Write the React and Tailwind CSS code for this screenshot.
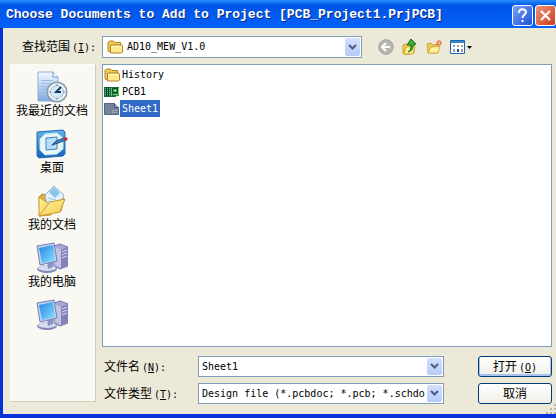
import React, { useState } from "react";

const files = [
  { name: "History", icon: FolderIcon },
  { name: "PCB1", icon: PcbIcon },
  { name: "Sheet1", icon: SheetIcon },
];

const places = [
  { label: "我最近的文档", icon: RecentIcon },
  { label: "桌面", icon: DesktopIcon },
  { label: "我的文档", icon: DocumentsIcon },
  { label: "我的电脑", icon: ComputerIcon },
  { label: "", icon: ComputerIcon },
];

function FolderIcon() {
  return (
    <svg width="16" height="16" viewBox="0 0 16 16" className="shrink-0" aria-hidden="true">
      <path d="M1 12V3.500L2.500 2h4L8 3.500h5.500L14 6v7H3Z" fill="#f0c94f" stroke="#b0842a" />
      <path d="M4 6h10.500l1 1v6l-1 1H3.500V7Z" fill="#ffe98c" stroke="#b0842a" />
      <path d="M4.500 7.500h10" stroke="#fffbd8" />
    </svg>
  );
}

function PcbIcon() {
  return (
    <svg width="16" height="16" viewBox="0 0 16 16" className="shrink-0" aria-hidden="true">
      <path d="M0 3h15v9h-3v1H0Z" fill="#1b6e42" />
      <path d="M1 4.500h5M1 6.500h5M1 8.500h5M1 10.500h5M7.500 4v8" stroke="#58c388" />
      <path d="M2.500 3v9M4.500 3v9" stroke="#0a3822" />
      <path d="M8.500 4.500h5v4h-5Z" fill="#3bb25a" stroke="#0b4522" />
      <path d="M9 10.500h4v2M14.500 4v7" stroke="#74d64c" fill="none" />
      <path d="M10 6h2v1h-2Z" fill="#b8f09b" />
    </svg>
  );
}

function SheetIcon() {
  return (
    <svg width="16" height="16" viewBox="0 0 16 16" className="shrink-0" aria-hidden="true">
      <path d="M.5 2.500h10l4 4v7H.5Z" fill="#74839a" stroke="#56657c" />
      <path d="M10.500 2.500v4h4" fill="#a5b4ca" stroke="#44546d" />
      <path d="M8 9.500h6M8 11.500h6M8.500 9v4" stroke="#94a2b8" />
    </svg>
  );
}

function RecentIcon() {
  return (
    <svg width="32" height="32" viewBox="0 0 32 32" aria-hidden="true">
      <defs>
        <linearGradient id="page" x1="0" y1="0" x2="0" y2="1">
          <stop offset="0" stopColor="#f2f8ff" />
          <stop offset="1" stopColor="#7fa9e0" />
        </linearGradient>
      </defs>
      <path d="M2 1h15l5 5v24H2Z" fill="url(#page)" stroke="#8daed6" />
      <path d="M17 1v5h5" fill="#fff" stroke="#6d93c8" />
      <path d="M5 9.500h12M5 12.500h9M5 15.500h7M5 18.500h6M5 21.500h6" stroke="#9cbce4" />
      <circle cx="21" cy="21" r="10.500" fill="#7f8ea4" />
      <circle cx="21" cy="21" r="9" fill="#f2f6f9" stroke="#c5d1de" />
      <circle cx="21" cy="21" r="6.500" fill="#d0e8f6" stroke="#a6c0d6" />
      <path d="M21 13v2M21 27v2M13 21h2M27 21h2" stroke="#6f91ae" />
      <path d="m25 16-5 5h5" fill="none" stroke="#173959" strokeWidth="1.800" />
    </svg>
  );
}

function DesktopIcon() {
  return (
    <svg width="32" height="32" viewBox="0 0 32 32" aria-hidden="true">
      <defs>
        <linearGradient id="desk" x1="0" y1="0" x2="0" y2="1">
          <stop offset="0" stopColor="#5fb4ea" />
          <stop offset="1" stopColor="#1a62ba" />
        </linearGradient>
      </defs>
      <path d="M1 4 27 2l2 2v22l-2 2L3 30l-2-2Z" fill="url(#desk)" stroke="#2a6db4" />
      <path d="m9 6 12-1 6 5v11l-6 5-12 1-5-5V11Z" fill="#eaf6f3" stroke="#b9e3f6" />
      <path d="m10 10 11-1v12l-11 1Z" fill="#b4defa" stroke="#3d83c0" />
      <path d="m16 17 4-4 8-3 2 2-8 3Z" fill="#4287c2" stroke="#235080" />
      <path d="m27 10 3-1 2 2-2 2-2-1Z" fill="#b83543" />
      <path d="m15 18 3-3 1 1Z" fill="#33506e" />
    </svg>
  );
}

function DocumentsIcon() {
  return (
    <svg width="32" height="32" viewBox="0 0 32 32" aria-hidden="true">
      <defs>
        <linearGradient id="envelope" x1="0" y1="0" x2="1" y2="1">
          <stop offset="0" stopColor="#fff3a0" />
          <stop offset="1" stopColor="#f3c94a" />
        </linearGradient>
      </defs>
      <path d="M3 12 6 9l5 1 12 2 5 2-3 12-21 5Z" fill="#e0b03a" stroke="#b98b25" />
      <path d="m9 10 9-9 10 9-5 12-12-2Z" fill="#e4f3fb" stroke="#8fb4cf" />
      <path d="m13 7 5-5 6 6-5 5Z" fill="#8cc3e8" />
      <path d="m12 13 8 2M12 16l7 2" stroke="#9cc0d6" />
      <path d="m3 12 10 7 2 11L3 31Z" fill="url(#envelope)" stroke="#c99b2c" />
      <path d="M3 31 14 17l15-3-5 13Z" fill="url(#envelope)" stroke="#c99b2c" />
    </svg>
  );
}

function ComputerIcon() {
  return (
    <svg width="32" height="32" viewBox="0 0 32 32" aria-hidden="true">
      <defs>
        <linearGradient id="screen" x1="0" y1="0" x2="1" y2="1">
          <stop offset="0" stopColor="#2386e4" />
          <stop offset="1" stopColor="#86e2ff" />
        </linearGradient>
      </defs>
      <path d="m18 4 6-2 8 3v19l-8 3-6-3Z" fill="#a9a8d4" stroke="#7675ad" />
      <path d="m25 8 7-3v18l-7 3Z" fill="#8281bc" />
      <path d="m19 5 6 3v18l-6-3Z" fill="#c5c4e4" />
      <path d="m26 10 5-2M26 13l5-2M26 16l5-2" stroke="#dcdcf2" />
      <ellipse cx="11" cy="27" rx="10" ry="4" fill="#7f86b4" />
      <ellipse cx="11" cy="26" rx="9" ry="3" fill="#d5daee" />
      <path d="m11 20 6-1v6l-5 2Z" fill="#8b93c6" />
      <path d="m1 4 17-3 3 18L4 23Z" fill="#c3cfec" stroke="#7283ba" />
      <path d="m3 6 14-3 2 15-13 3Z" fill="url(#screen)" />
    </svg>
  );
}

function BackIcon() {
  return (
    <svg width="16" height="16" viewBox="0 0 16 16" aria-hidden="true">
      <circle cx="8" cy="8" r="7.300" fill="#b6b6b1" stroke="#a3a39e" />
      <path d="M12 8H4M8 4 4 8l4 4" fill="none" stroke="#fff" strokeWidth="2" />
    </svg>
  );
}

function UpIcon() {
  return (
    <svg width="16" height="16" viewBox="0 0 16 16" aria-hidden="true">
      <path d="m1 6 3-1 2 1 6-1v9l-9 2-2-2Z" fill="#efcf51" stroke="#c9a436" />
      <path d="m2 15 2-7 9-1-2 8Z" fill="#fff092" stroke="#cfaa32" />
      <path d="M6 13c3-2 3-4 3-7H5l4-6 5 5-3 1c0 4-1 6-5 7Z" fill="#35ac32" stroke="#167322" />
    </svg>
  );
}

function NewFolderIcon() {
  return (
    <svg width="16" height="16" viewBox="0 0 16 16" aria-hidden="true">
      <path d="m1 5 4-1 2 2 5-1v9H2Z" fill="#efc958" stroke="#cfa643" />
      <path d="m2 14 3-6 9-1-2 7Z" fill="#fff09b" stroke="#d2ac43" />
      <path d="M13 1v6M10 4h6M11 2l4 4M15 2l-4 4" stroke="#e0562a" />
      <circle cx="13" cy="4" r="1" fill="#ffd56b" />
    </svg>
  );
}

function ViewIcon() {
  return (
    <svg width="23" height="16" viewBox="0 0 23 16" aria-hidden="true">
      <path d="M.5 1.500h14v13H.5Z" fill="#fff" stroke="#1b68ad" />
      <path d="M1 2h13v2H1Z" fill="#3687ce" />
      <path d="M3 6h2v2H3ZM7 6h2v2H7ZM11 6h2v2h-2ZM3 10h2v3H3ZM11 10h2v3h-2Z" fill="#8ba1ae" />
      <path d="M7 10h2v3H7Z" fill="#164f98" />
      <path d="M17 7h5l-2.500 3Z" fill="#000" />
    </svg>
  );
}

function Chevron() {
  return (
    <span className="flex h-full w-[15px] items-center justify-center rounded-xs bg-linear-to-b from-[#d3e0fd] to-[#b5cbf8]">
      <svg width="9" height="7" viewBox="0 0 9 7" aria-hidden="true">
        <path d="m1 1 3.500 3.500L8 1" fill="none" stroke="#4a618c" strokeWidth="2.200" />
      </svg>
    </span>
  );
}

function ResizeGrip() {
  return (
    <svg width="10" height="10" viewBox="0 0 10 10" className="absolute right-0 bottom-0" aria-hidden="true">
      <path d="M8 0h2v2H8ZM4 4h2v2H4ZM8 4h2v2H8ZM0 8h2v2H0ZM4 8h2v2H4ZM8 8h2v2H8Z" fill="#b8b4a3" />
    </svg>
  );
}

// Caption with its access key, e.g. 打开(O)
function Caption({ text, hotkey, colon }) {
  return (
    <>
      {text}
      <span className="ml-0.5 text-[10px]">
        (<u>{hotkey}</u>){colon && ":"}
      </span>
    </>
  );
}

export default function App() {
  const [selected, setSelected] = useState("Sheet1");
  const [fileName, setFileName] = useState("Sheet1");

  const handleSelect = (name) => {
    setSelected(name);
    setFileName(name);
  };

  return (
    <main className="flex min-h-screen flex-col bg-[#0831d9] font-['DejaVu_Sans_Mono','Noto_Sans_CJK_SC',monospace] text-xs text-black">
      <header className="flex h-7 items-center justify-between bg-linear-to-b from-[#2a8cf8] via-[#0055e8] via-20% to-[#0561fa] pt-0.5 pl-1.5">
        <h1 className="truncate font-['Liberation_Mono',monospace] text-[13px] font-bold text-white [text-shadow:1px_1px_#0a2a80]">
          Choose Documents to Add to Project [PCB_Project1.PrjPCB]
        </h1>
        <div className="flex shrink-0 gap-0.5">
          <button aria-label="Help" className="flex size-[21px] items-center justify-center rounded-[3px] border border-white bg-linear-to-br from-[#7ba0f5] to-[#1c4fd8]">
            <svg width="13" height="15" viewBox="0 0 13 15" aria-hidden="true">
              <path d="M3 5c0-5 7-4.500 7-1 0 2.500-3.500 3-3.500 6" fill="none" stroke="#fff" strokeWidth="2" />
              <path d="M5.500 12h2v2h-2Z" fill="#fff" />
            </svg>
          </button>
          <button aria-label="Close" className="flex size-[21px] items-center justify-center rounded-[3px] border border-white bg-linear-to-br from-[#ef9377] to-[#cc3912]">
            <svg width="13" height="13" viewBox="0 0 13 13" aria-hidden="true">
              <path d="m2 2 9 9m0-9-9 9" stroke="#fff" strokeWidth="2.200" />
            </svg>
          </button>
        </div>
      </header>

      <div className="relative mb-1 ml-[3px] flex flex-1 flex-col gap-1.5 bg-[#ece9d8] pt-2 pr-1 pl-[7px]">
        <div className="flex items-center">
          <label htmlFor="look-in" className="w-[92px] shrink-0 pl-3 whitespace-nowrap">
            <Caption text="查找范围" hotkey="I" colon />
          </label>
          <div className="relative flex h-[22px] w-[48%] items-center border border-[#7f9db9] bg-white">
            <span className="pointer-events-none absolute left-1">
              <FolderIcon />
            </span>
            <select id="look-in" className="h-full w-full appearance-none pl-6 text-[10px] outline-none">
              <option>AD10_MEW_V1.0</option>
            </select>
            <span className="pointer-events-none absolute inset-y-px right-px">
              <Chevron />
            </span>
          </div>
          <div className="ml-4 flex gap-2">
            <button aria-label="Back" disabled><BackIcon /></button>
            <button aria-label="Up one level"><UpIcon /></button>
            <button aria-label="New folder"><NewFolderIcon /></button>
            <button aria-label="View menu"><ViewIcon /></button>
          </div>
        </div>

        <div className="flex flex-1 gap-1.5">
          <nav className="mb-3 flex w-[86px] shrink-0 flex-col gap-[9px] border border-[#fdfcf8] border-r-[#d0cdbc] border-b-[#d0cdbc] bg-[#f9f8f2] pt-1.5 pr-0.5">
            {places.map((place, index) => (
              <button key={index} aria-label={place.label || "Network"} className="flex flex-col items-center">
                <place.icon />
                <span className="h-4 leading-4 whitespace-nowrap">{place.label}</span>
              </button>
            ))}
          </nav>

          <div className="flex min-w-0 flex-1 flex-col gap-[9px] pb-2.5">
            <ul className="flex-1 border border-[#7f9db9] bg-white pt-px pl-px">
              {files.map((file) => (
                <li key={file.name}>
                  <button onClick={() => handleSelect(file.name)} className="flex h-[17px] items-center text-[10px]">
                    <file.icon />
                    <span className={selected === file.name ? "bg-[#316ac5] px-0.5 leading-[17px] text-white" : "px-0.5 leading-[17px]"}>
                      {file.name}
                    </span>
                  </button>
                </li>
              ))}
            </ul>

            <div className="grid grid-cols-[96px_1fr_74px] items-center gap-y-1.5">
              <label htmlFor="file-name" className="pl-0.5">
                <Caption text="文件名" hotkey="N" colon />
              </label>
              <div className="mr-[34px] flex h-[21px] border border-[#7f9db9] bg-white p-px">
                <input
                  id="file-name"
                  type="text"
                  value={fileName}
                  onChange={(e) => setFileName(e.target.value)}
                  className="min-w-0 flex-1 pl-0.5 text-[10px] outline-none"
                />
                <button aria-label="Recent names"><Chevron /></button>
              </div>
              <button className="h-[21px] rounded-[3px] border border-[#003c74] bg-linear-to-b from-white to-[#f0efe8] leading-none shadow-[inset_0_-1px_0_1px_#a9c3f0]">
                <Caption text="打开" hotkey="O" />
              </button>

              <label htmlFor="file-type" className="pl-0.5">
                <Caption text="文件类型" hotkey="T" colon />
              </label>
              <div className="relative mr-[34px] h-[21px] border border-[#7f9db9] bg-white">
                <select id="file-type" className="h-full w-full appearance-none pr-4 pl-[3px] text-[10px] outline-none">
                  <option>Design file (*.pcbdoc; *.pcb; *.schdo</option>
                </select>
                <span className="pointer-events-none absolute inset-y-px right-px">
                  <Chevron />
                </span>
              </div>
              <button className="h-[21px] rounded-[3px] border border-[#003c74] bg-linear-to-b from-white to-[#f0efe8] leading-none">
                取消
              </button>
            </div>
          </div>
        </div>
        <ResizeGrip />
      </div>
    </main>
  );
}
